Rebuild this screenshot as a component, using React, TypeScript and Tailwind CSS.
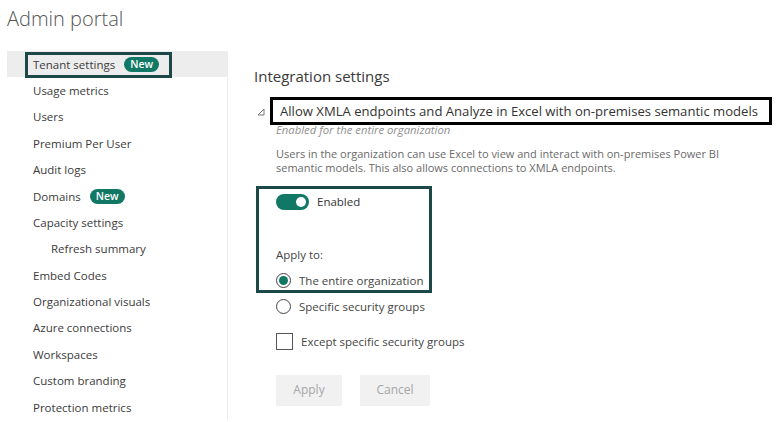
import React from 'react'

const font = { fontFamily: '"Open Sans", "Noto Sans", Arial, sans-serif' }

type NavItem = { label: string; badge?: boolean; indent?: boolean; selected?: boolean }

const navItems: NavItem[] = [
  { label: 'Tenant settings', badge: true, selected: true },
  { label: 'Usage metrics' },
  { label: 'Users' },
  { label: 'Premium Per User' },
  { label: 'Audit logs' },
  { label: 'Domains', badge: true },
  { label: 'Capacity settings' },
  { label: 'Refresh summary', indent: true },
  { label: 'Embed Codes' },
  { label: 'Organizational visuals' },
  { label: 'Azure connections' },
  { label: 'Workspaces' },
  { label: 'Custom branding' },
  { label: 'Protection metrics' },
]

function NewBadge() {
  return (
    <span className="ml-[9px] inline-flex h-[15px] items-center rounded-full bg-[#117865] px-[6px] text-[10.5px] font-semibold leading-none text-white">
      New
    </span>
  )
}

function Sidebar() {
  return (
    <div className="relative ml-[7px] w-[221px] shrink-0 border-r border-[#ececec]">
      {navItems.map((item) => (
        <div
          key={item.label}
          className={
            'flex h-[26.4px] items-center text-[11.5px] text-[#3b3b3b] ' +
            (item.indent ? 'pl-[44px] ' : 'pl-[26px] ') +
            (item.selected ? 'bg-[#ededed]' : '')
          }
        >
          {item.label}
          {item.badge && <NewBadge />}
        </div>
      ))}
      {/* highlight annotation */}
      <div className="pointer-events-none absolute left-[18px] top-[1px] h-[26px] w-[147px] border-[3px] border-[#1c4848]" />
    </div>
  )
}

function Radio({ checked, label }: { checked?: boolean; label: string }) {
  return (
    <div className="flex h-[26px] items-center">
      <span className="flex h-[15px] w-[15px] items-center justify-center rounded-full border border-[#444]">
        {checked && <span className="h-[9px] w-[9px] rounded-full bg-[#117865]" />}
      </span>
      <span className="ml-[8px] text-[11.5px] text-[#444]">{label}</span>
    </div>
  )
}

function Main() {
  return (
    <div className="relative flex-1 pl-[26px]">
      <div className="pt-[14px] text-[15px] text-[#3a3a3a]">Integration settings</div>

      <div className="mt-[14px] flex items-center">
        <svg width="8" height="8" viewBox="0 0 8 8" className="ml-[3px] mr-[15px] mt-[1px]">
          <path d="M7 1 L7 7 L1 7 Z" fill="none" stroke="#777" strokeWidth="1" />
        </svg>
        <div className="text-[13.1px] text-[#333]">Allow XMLA endpoints and Analyze in Excel with on-premises semantic models</div>
      </div>

      <div className="pl-[22px]">
        <div className="mt-[1px] text-[11.3px] italic leading-[16px] text-[#8f8f8f]">Enabled for the entire organization</div>
        <div className="mt-[9px] w-[445px] text-[11px] leading-[14px] text-[#6a6a6a]">
          Users in the organization can use Excel to view and interact with on-premises Power BI semantic models. This also allows connections to XMLA endpoints.
        </div>

        <div className="mt-[18px] flex items-center">
          <span className="flex h-[16px] w-[33px] items-center justify-end rounded-full bg-[#117865] pr-[3px]">
            <span className="h-[10px] w-[10px] rounded-full bg-white" />
          </span>
          <span className="ml-[8px] text-[11.5px] text-[#333]">Enabled</span>
        </div>

        <div className="mt-[36px] text-[11.5px] text-[#444]">Apply to:</div>
        <div className="mt-[4px]">
          <Radio checked label="The entire organization" />
          <Radio label="Specific security groups" />
        </div>

        <div className="mt-[13px] flex items-center">
          <span className="h-[17px] w-[17px] border border-[#555]" />
          <span className="ml-[8px] text-[11.5px] text-[#444]">Except specific security groups</span>
        </div>

        <div className="mt-[25px] flex gap-[18px]">
          <button type="button" className="h-[31px] w-[66px] bg-[#f1f1f1] text-[12px] text-[#a6a6a6]">
            Apply
          </button>
          <button type="button" className="h-[31px] w-[70px] bg-[#f1f1f1] text-[12px] text-[#a6a6a6]">
            Cancel
          </button>
        </div>
      </div>

      {/* annotation boxes */}
      <div className="pointer-events-none absolute left-[42px] top-[46px] h-[28px] w-[502px] border-[3px] border-black" />
      <div className="pointer-events-none absolute left-[28px] top-[135px] h-[107px] w-[176px] border-[3px] border-[#1c4848]" />
    </div>
  )
}

export default function App() {
  return (
    <div className="h-[422px] w-[776px] overflow-hidden bg-white" style={font}>
      <div className="h-[51px] pl-[7px] pt-[4px] text-[20px] font-light text-[#555]">Admin portal</div>
      <div className="flex">
        <Sidebar />
        <Main />
      </div>
    </div>
  )
}
